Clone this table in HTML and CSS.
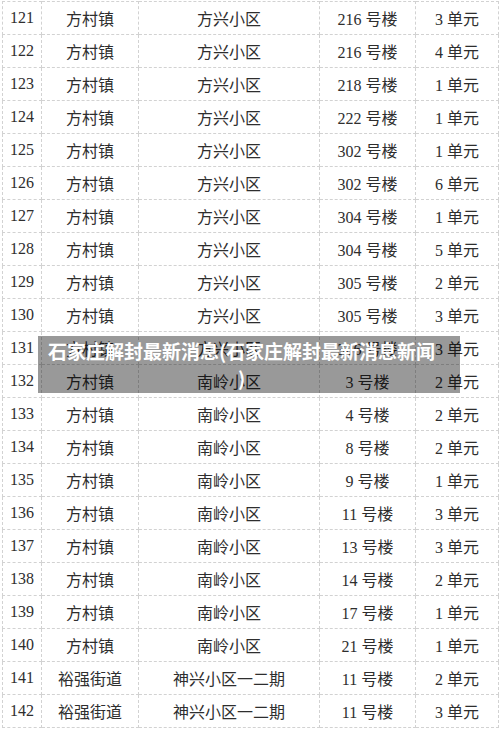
FILE: index.html
```html
<!DOCTYPE html>
<html lang="zh-CN">
<head>
<meta charset="utf-8">
<title>石家庄解封最新消息</title>
<link rel="stylesheet" href="styles.css">
</head>
<body>
<div class="page">
  <table class="sheet">
    <colgroup>
      <col class="c-no"><col class="c-town"><col class="c-area"><col class="c-bldg"><col class="c-unit">
    </colgroup>
    <tbody>
      <tr><td>121</td><td>方村镇</td><td>方兴小区</td><td>216 号楼</td><td>3 单元</td></tr>
      <tr><td>122</td><td>方村镇</td><td>方兴小区</td><td>216 号楼</td><td>4 单元</td></tr>
      <tr><td>123</td><td>方村镇</td><td>方兴小区</td><td>218 号楼</td><td>1 单元</td></tr>
      <tr><td>124</td><td>方村镇</td><td>方兴小区</td><td>222 号楼</td><td>1 单元</td></tr>
      <tr><td>125</td><td>方村镇</td><td>方兴小区</td><td>302 号楼</td><td>1 单元</td></tr>
      <tr><td>126</td><td>方村镇</td><td>方兴小区</td><td>302 号楼</td><td>6 单元</td></tr>
      <tr><td>127</td><td>方村镇</td><td>方兴小区</td><td>304 号楼</td><td>1 单元</td></tr>
      <tr><td>128</td><td>方村镇</td><td>方兴小区</td><td>304 号楼</td><td>5 单元</td></tr>
      <tr><td>129</td><td>方村镇</td><td>方兴小区</td><td>305 号楼</td><td>2 单元</td></tr>
      <tr><td>130</td><td>方村镇</td><td>方兴小区</td><td>305 号楼</td><td>3 单元</td></tr>
      <tr><td>131</td><td>方村镇</td><td>方兴小区</td><td>306 号楼</td><td>3 单元</td></tr>
      <tr><td>132</td><td>方村镇</td><td>南岭小区</td><td>3 号楼</td><td>2 单元</td></tr>
      <tr><td>133</td><td>方村镇</td><td>南岭小区</td><td>4 号楼</td><td>2 单元</td></tr>
      <tr><td>134</td><td>方村镇</td><td>南岭小区</td><td>8 号楼</td><td>2 单元</td></tr>
      <tr><td>135</td><td>方村镇</td><td>南岭小区</td><td>9 号楼</td><td>1 单元</td></tr>
      <tr><td>136</td><td>方村镇</td><td>南岭小区</td><td>11 号楼</td><td>3 单元</td></tr>
      <tr><td>137</td><td>方村镇</td><td>南岭小区</td><td>13 号楼</td><td>3 单元</td></tr>
      <tr><td>138</td><td>方村镇</td><td>南岭小区</td><td>14 号楼</td><td>2 单元</td></tr>
      <tr><td>139</td><td>方村镇</td><td>南岭小区</td><td>17 号楼</td><td>1 单元</td></tr>
      <tr><td>140</td><td>方村镇</td><td>南岭小区</td><td>21 号楼</td><td>1 单元</td></tr>
      <tr><td>141</td><td>裕强街道</td><td>神兴小区一二期</td><td>11 号楼</td><td>2 单元</td></tr>
      <tr><td>142</td><td>裕强街道</td><td>神兴小区一二期</td><td>11 号楼</td><td>3 单元</td></tr>
    </tbody>
  </table>
  <div class="caption">石家庄解封最新消息(石家庄解封最新消息新闻)</div>
</div>
</body>
</html>
```

FILE: styles.css
```css
html, body {
  margin: 0;
  padding: 0;
  background: #ffffff;
}

.page {
  position: relative;
  width: 500px;
  height: 730px;
  overflow: hidden;
  padding: 1px 0 0 2px;
  box-sizing: border-box;
}

.sheet {
  border-collapse: collapse;
  table-layout: fixed;
  width: 496px;
  font-family: "Liberation Serif", "Noto Sans CJK SC", serif;
  font-size: 16px;
  color: #2e2e2e;
}

.c-no { width: 39px; }
.c-town { width: 97px; }
.c-area { width: 181px; }
.c-bldg { width: 96px; }
.c-unit { width: 83px; }

.sheet td {
  height: 32px;
  padding: 0;
  text-align: center;
  vertical-align: middle;
  border: 1px dashed #d2d2d2;
  white-space: nowrap;
}

.caption {
  position: absolute;
  left: 38px;
  top: 336px;
  width: 422px;
  height: 57px;
  box-sizing: border-box;
  padding: 1px 24px 0 9px;
  background: rgba(0, 0, 0, 0.4);
  color: #ffffff;
  font-family: "Noto Sans CJK SC", sans-serif;
  font-weight: 700;
  font-size: 19px;
  line-height: 27px;
  text-align: center;
  line-break: anywhere;
}
```
